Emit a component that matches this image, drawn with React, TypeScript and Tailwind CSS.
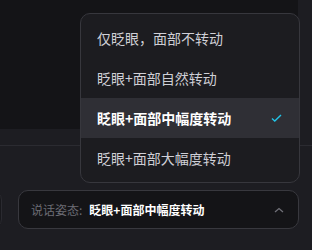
import React from "react";

const items = [
  "仅眨眼，面部不转动",
  "眨眼+面部自然转动",
  "眨眼+面部中幅度转动",
  "眨眼+面部大幅度转动",
];

export default function App() {
  const selected = 2;
  return (
    <div
      className="relative w-[312px] h-[250px] overflow-hidden bg-[#1d1d22]"
      style={{ fontFamily: '"Noto Sans CJK SC", "Noto Sans", sans-serif' }}
    >
      <div className="w-[298px] h-[129px] bg-[#141417]" />
      <div className="h-[17px] border-b border-[#2b2b31]" />
      <div className="mt-[44px] flex items-center">
        <div className="w-[14px] h-[39px] -ml-[12px] rounded-r-[10px] border border-[#2a2a30] bg-[#18181c]" />
        <div className="ml-[16px] w-[281px] h-[39px] rounded-[10px] border border-[#38383e] bg-[#141417] flex items-center pl-[12px] pr-[14px]">
          <span className="text-[12px] text-[#6c6c74] leading-none">说话姿态:</span>
          <span className="ml-[7px] text-[12px] font-bold text-white leading-none">
            眨眼+面部中幅度转动
          </span>
          <svg
            className="ml-auto"
            width="10"
            height="6"
            viewBox="0 0 10 6"
            fill="none"
          >
            <path d="M1 5L5 1.5L9 5" stroke="#707078" strokeWidth="1.3" />
          </svg>
        </div>
      </div>

      <div className="absolute left-[80px] top-[13px] w-[220px] rounded-[10px] border border-[#37373d] bg-[#1c1c20] py-[4px] overflow-hidden">
        {items.map((t, i) => (
          <div
            key={t}
            className={
              "h-[40px] flex items-center pl-[16px] pr-[16px] text-[14px] " +
              (i === selected
                ? "bg-[#2f2f35] text-white font-bold"
                : "text-[#cfcfd6]")
            }
          >
            <span>{t}</span>
            {i === selected && (
              <svg
                className="ml-auto mr-[1px]"
                width="11"
                height="8"
                viewBox="0 0 11 8"
                fill="none"
              >
                <path
                  d="M1 4.5L3.8 7L10 1"
                  stroke="#22c3e6"
                  strokeWidth="1.4"
                />
              </svg>
            )}
          </div>
        ))}
      </div>
    </div>
  );
}
